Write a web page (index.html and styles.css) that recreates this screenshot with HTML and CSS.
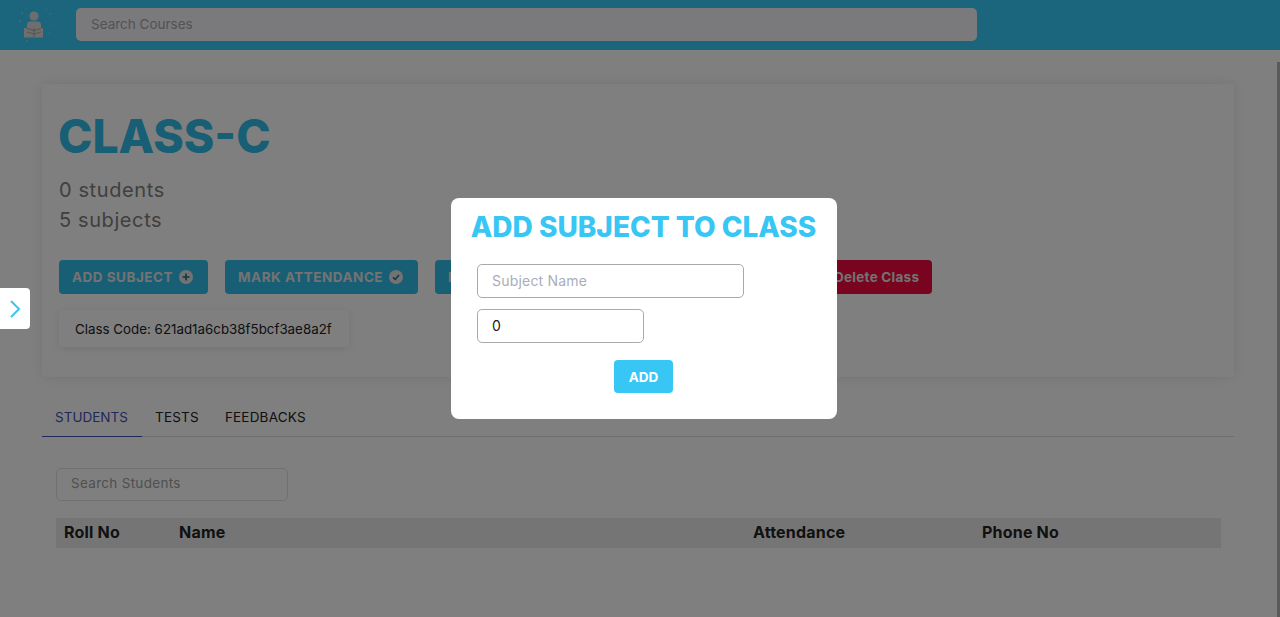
FILE: index.html
```html
<!DOCTYPE html>
<html lang="en">
<head>
  <meta charset="UTF-8" />
  <title>Class-C</title>
  <meta name="viewport" content="width=device-width, initial-scale=1" />
  <link rel="stylesheet" href="styles.css">
</head>
<body>

  <header class="topbar">
    <svg class="logo" viewBox="0 0 40 40" width="40" height="40">
      <circle cx="19" cy="12" r="4.500" fill="#dcdcdc" />
      <path d="M12 21q0-3.500 3.500-3.500h7q3.500 0 3.500 3.500v3h2v9.500H9v-9.500h3z" fill="#dcdcdc" />
      <path d="M19 24v9M12 24.500l7 2 7-2M12 28l7 2 7-2" stroke="#9a9a9a" stroke-width=".8" fill="none" />
      <g fill="#cfcfcf">
        <circle cx="5" cy="17" r=".8" />
        <circle cx="7" cy="9" r=".8" />
        <circle cx="11" cy="5" r=".5" />
        <circle cx="31" cy="5" r=".6" />
        <circle cx="35" cy="10" r=".7" />
        <circle cx="36" cy="21" r=".5" />
        <circle cx="34" cy="29" r=".6" />
        <circle cx="12" cy="37" r=".8" />
      </g>
    </svg>
    <input class="search-courses" type="text" placeholder="Search Courses" />
  </header>

  <main class="content">
    <section class="class-card">
      <h1>CLASS-C</h1>
      <p class="stat">0 students</p>
      <p class="stat">5 subjects</p>

      <div class="actions">
        <button class="btn">ADD SUBJECT
          <svg class="btn-icon" viewBox="0 0 14 14"><circle cx="7" cy="7" r="7" fill="#e6e6e6" /><path d="M7 3.500v7M3.500 7h7" stroke="#1c6a84" stroke-width="1.600" /></svg>
        </button>
        <button class="btn">MARK ATTENDANCE
          <svg class="btn-icon" viewBox="0 0 14 14"><circle cx="7" cy="7" r="7" fill="#e6e6e6" /><path d="M4 7.300l2.200 2.200L10 5" stroke="#1c6a84" stroke-width="1.500" fill="none" /></svg>
        </button>
        <button class="btn btn-wide">POST ANNOUNCEMENT</button>
        <button class="btn btn-delete">Delete Class</button>
      </div>

      <div class="class-code">Class Code: 621ad1a6cb38f5bcf3ae8a2f</div>
    </section>

    <nav class="tabs">
      <a class="tab tab-active">STUDENTS</a>
      <a class="tab">TESTS</a>
      <a class="tab">FEEDBACKS</a>
    </nav>

    <div class="students">
      <input class="search-students" type="text" placeholder="Search Students" />
      <table class="students-table">
        <thead>
          <tr>
            <th class="col-roll">Roll No</th>
            <th class="col-name">Name</th>
            <th class="col-att">Attendance</th>
            <th>Phone No</th>
          </tr>
        </thead>
      </table>
    </div>
  </main>

  <div class="scroll-thumb"></div>

  <div class="overlay">
    <div class="modal">
      <h2>ADD SUBJECT TO CLASS</h2>
      <input class="field field-name" type="text" placeholder="Subject Name" />
      <input class="field field-num" type="text" value="0" />
      <button class="btn-add">ADD</button>
    </div>
  </div>

  <button class="side-toggle" aria-label="Open">
    <svg viewBox="0 0 12 20" width="12" height="20"><path d="M2 2l8 8-8 8" fill="none" stroke="#38c6f4" stroke-width="2" /></svg>
  </button>

</body>
</html>
```

FILE: styles.css
```css
* {
  box-sizing: border-box;
}
body {
  margin: 0;
  background: #fff;
  font-family: Inter, "Noto Sans", sans-serif;
  color: #222;
  height: 617px;
  overflow: hidden;
}
.topbar {
  height: 50px;
  background: #36cdf8;
  display: flex;
  align-items: flex-start;
  padding: 8px 0 0 15px;
  gap: 21px;
}
.logo {
  margin-top: -4px;
}
.search-courses {
  width: 901px;
  height: 33px;
  border: none;
  border-radius: 5px;
  background: #f4f4f8;
  padding: 0 15px 1px;
  font: 13.500px Inter, sans-serif;
}
.search-courses::placeholder {
  color: #a4a4aa;
}
.content {
  padding: 34px 46px 0 42px;
}
.class-card {
  height: 293px;
  padding: 22px 17px;
  box-shadow: 0 0 14px rgba(0, 0, 0, 0.1);
  border-radius: 4px;
}
h1 {
  margin: 0 0 9px -1px;
  font-size: 46.300px;
  line-height: 60px;
  font-weight: 800;
  color: #30bde8;
}
.stat {
  margin: 0;
  font-size: 20px;
  line-height: 30px;
  color: #808080;
  letter-spacing: 0.6px;
}
.actions {
  display: flex;
  gap: 17px;
  margin-top: 25px;
}
.btn {
  height: 34px;
  padding: 0 15px 0 13px;
  border: none;
  border-radius: 4px;
  background: #30bde8;
  color: #e6e6e6;
  font: 700 13.500px Inter, sans-serif;
  letter-spacing: 0.5px;
  display: flex;
  align-items: center;
  gap: 6px;
}
.btn-icon {
  width: 14px;
  height: 14px;
}
.btn-wide {
  width: 369px;
}
.btn-delete {
  padding-right: 13px;
  background: #f0083f;
  letter-spacing: 0.25px;
}
.class-code {
  width: 290px;
  height: 37px;
  margin-top: 16px;
  padding-left: 16px;
  display: flex;
  align-items: center;
  font-size: 13.350px;
  color: #222;
  box-shadow: 0 2px 8px rgba(0, 0, 0, 0.1);
  border-radius: 4px;
}
.tabs {
  display: flex;
  height: 37px;
  margin-top: 23px;
  border-bottom: 1px solid #ddd;
}
.tab {
  padding: 0 13px;
  font-size: 13.500px;
  line-height: 34px;
  letter-spacing: 0.2px;
  color: #222;
}
.tab-active {
  width: 100px;
  height: 37px;
  color: #3f51b5;
  letter-spacing: 0;
  border-bottom: 1px solid #3f51b5;
}
.students {
  padding: 31px 13px 0 14px;
}
.search-students {
  display: block;
  width: 232px;
  height: 33px;
  padding: 0 14px 3px;
  border: 1px solid #e2e2e2;
  border-radius: 5px;
  background: transparent;
  font: 13.500px Inter, sans-serif;
  letter-spacing: 0.3px;
}
.search-students::placeholder {
  color: #a0a0a0;
}
.students-table {
  width: 100%;
  margin-top: 17px;
  border-collapse: collapse;
  table-layout: fixed;
  background: #ebebeb;
}
.students-table th {
  height: 30px;
  padding: 0 0 2px 8px;
  text-align: left;
  font-size: 16px;
  font-weight: 700;
  letter-spacing: 0.2px;
  color: #222;
}
.col-roll {
  width: 115px;
}
.col-name {
  width: 574px;
}
.col-att {
  width: 229px;
}
.scroll-thumb {
  position: fixed;
  top: 62px;
  right: 0;
  bottom: 0;
  width: 3px;
  background: #b4b4b4;
}
.overlay {
  position: fixed;
  inset: 0;
  background: rgba(0, 0, 0, 0.5);
  display: flex;
  align-items: center;
  justify-content: center;
  padding-left: 8px;
}
.modal {
  width: 386px;
  height: 221px;
  padding: 12px 27px 0 26px;
  background: #fff;
  border-radius: 8px;
  display: flex;
  flex-direction: column;
  align-items: flex-start;
}
h2 {
  margin: 0 -6px 0;
  align-self: center;
  white-space: nowrap;
  font-size: 28px;
  line-height: 34px;
  font-weight: 800;
  color: #38c6f4;
}
.field {
  height: 34px;
  padding: 0 14px 1px;
  border: 1px solid #aaa;
  border-radius: 5px;
  background: #fff;
  font: 14px Inter, sans-serif;
  letter-spacing: 0.2px;
  color: #222;
}
.field::placeholder {
  color: #a9adbb;
}
.field-name {
  width: 267px;
  margin-top: 20px;
}
.field-num {
  width: 167px;
  margin-top: 11px;
}
.btn-add {
  align-self: center;
  width: 59px;
  height: 33px;
  margin-top: 17px;
  border: none;
  border-radius: 4px;
  background: #38c6f4;
  color: #fff;
  font: 700 13.500px Inter, sans-serif;
}
.side-toggle {
  position: fixed;
  left: 0;
  top: 288px;
  width: 30px;
  height: 41px;
  padding: 0;
  border: none;
  background: #fff;
  border-radius: 0 4px 4px 0;
  display: flex;
  align-items: center;
  justify-content: center;
}
```
